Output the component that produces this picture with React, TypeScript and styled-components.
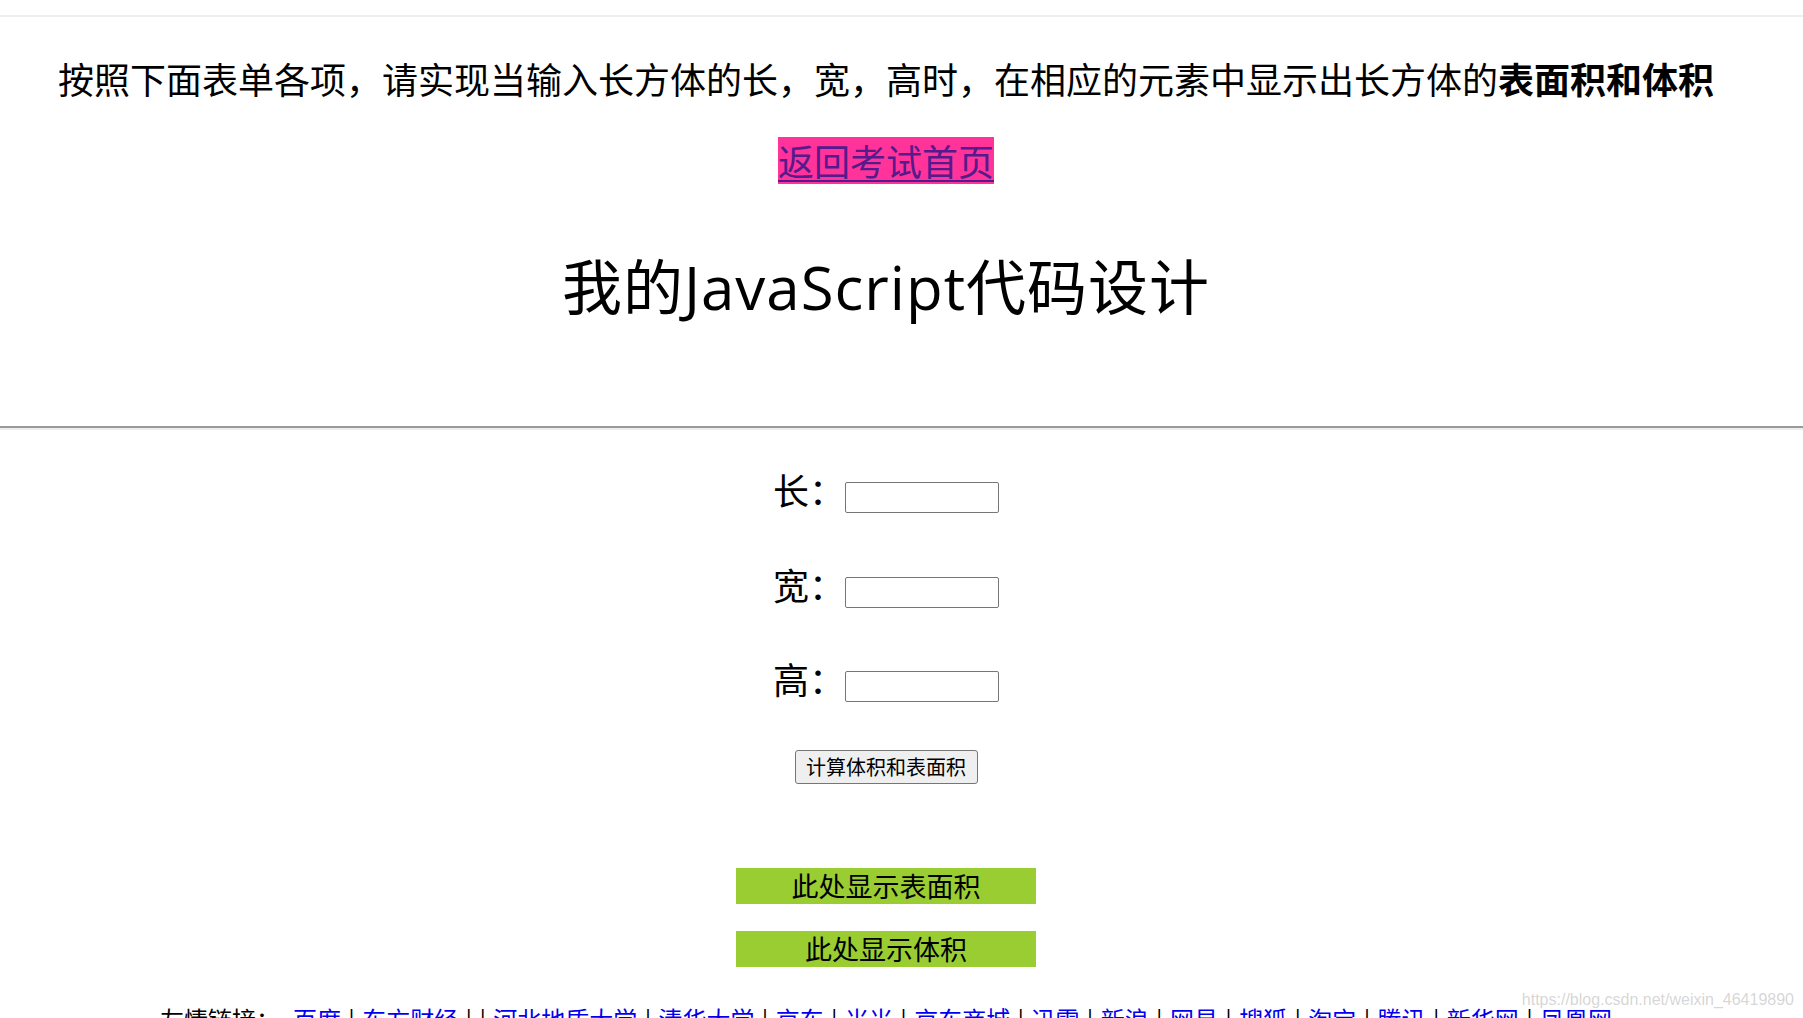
import React from "react";
import styled, { createGlobalStyle } from "styled-components";

const GlobalStyle = createGlobalStyle`
  html, body {
    margin: 0;
    padding: 0;
    background: #ffffff;
    height: 1018px;
    overflow: hidden;
  }
  body {
    font-family: "Noto Sans CJK SC", "Noto Sans", sans-serif;
    color: #000;
  }
`;

const Page = styled.div`
  position: relative;
  width: 1803px;
  height: 1018px;
  overflow: hidden;
`;

const TopStrip = styled.div`
  height: 15px;
  border-bottom: 2px solid #efefef;
`;

const Column = styled.div`
  width: 1772px;
  display: flex;
  flex-direction: column;
  align-items: center;
  text-align: center;
`;

const Intro = styled.p`
  margin: 37px 0 0;
  font-size: 36px;
  line-height: 48px;
  white-space: nowrap;
  font-weight: 400;

  b {
    font-weight: 700;
  }
`;

const HomeLink = styled.a`
  display: inline-block;
  margin-top: 35px;
  height: 47px;
  line-height: 47px;
  font-size: 36px;
  background: #ff3399;
  color: #551a8b;
  text-decoration: underline;
  text-decoration-thickness: 2px;
  text-underline-offset: 4px;
`;

const Title = styled.h1`
  margin: 67px 0 0;
  font-family: "Open Sans", "Noto Sans CJK SC", sans-serif;
  font-size: 60px;
  line-height: 72px;
  font-weight: 400;
  letter-spacing: 1px;
`;

const Rule = styled.hr`
  margin: 103px 0 0;
  width: 100%;
  height: 0;
  border: none;
  border-top: 2px solid #9a9a9a;
  border-bottom: 2px solid #eeeeee;
`;

const Form = styled.form`
  margin-top: 52px;
  display: flex;
  flex-direction: column;
  align-items: center;
  gap: 63.5px;
`;

const FieldRow = styled.label`
  height: 31px;
  display: flex;
  align-items: center;
  justify-content: center;
`;

const FieldLabel = styled.span`
  font-size: 36px;
  line-height: 31px;
  width: 72px;
  text-align: left;
  transform: translateY(-8px);
`;

const FieldInput = styled.input`
  box-sizing: border-box;
  width: 154px;
  height: 31px;
  border: 1px solid #767676;
  border-radius: 2px;
  padding: 2px 4px;
  font-size: 20px;
  background: #fff;
  outline: none;
`;

const CalcButton = styled.button`
  margin-top: 48px;
  box-sizing: border-box;
  width: 183px;
  height: 34px;
  padding: 0;
  font-family: "Noto Sans CJK SC", sans-serif;
  font-size: 20px;
  line-height: 32px;
  color: #000;
  background: #efefef;
  border: 1px solid #767676;
  border-radius: 3px;
`;

const ResultBox = styled.div<{ $first?: boolean }>`
  margin-top: ${(p) => (p.$first ? "84px" : "27px")};
  width: 300px;
  height: 36px;
  line-height: 36px;
  font-size: 27px;
  background: #9acd32;
`;

const Footer = styled.div`
  margin-top: 36px;
  font-size: 24px;
  line-height: 32px;
  white-space: nowrap;
  word-spacing: 2px;

  a {
    color: #0000ee;
    text-decoration: underline;
  }
`;

const FooterLabel = styled.span`
  margin-right: 13px;
`;

const Watermark = styled.div`
  position: absolute;
  right: 9px;
  top: 991px;
  font-family: "Liberation Sans", Arial, sans-serif;
  font-size: 16px;
  color: rgba(150, 150, 150, 0.4);
  pointer-events: none;
`;

const fields = ["长", "宽", "高"];

const links = [
  "百度",
  "东方财经",
  "",
  "河北地质大学",
  "清华大学",
  "京东",
  "米米",
  "京东商城",
  "迅雷",
  "新浪",
  "网易",
  "搜狐",
  "淘宝",
  "腾讯",
  "新华网",
  "凤凰网",
];

export default function App() {
  return (
    <>
      <GlobalStyle />
      <Page>
        <TopStrip />
        <Column>
          <Intro>
            按照下面表单各项，请实现当输入长方体的长，宽，高时，在相应的元素中显示出长方体的
            <b>表面积和体积</b>
          </Intro>
          <HomeLink href="#">返回考试首页</HomeLink>
          <Title>我的JavaScript代码设计</Title>
        </Column>
        <Rule />
        <Column>
          <Form onSubmit={(e) => e.preventDefault()}>
            {fields.map((f) => (
              <FieldRow key={f}>
                <FieldLabel>{f}：</FieldLabel>
                <FieldInput type="text" />
              </FieldRow>
            ))}
          </Form>
          <CalcButton type="button">计算体积和表面积</CalcButton>
          <ResultBox $first>此处显示表面积</ResultBox>
          <ResultBox>此处显示体积</ResultBox>
          <Footer>
            <FooterLabel>友情链接：</FooterLabel>
            {links.map((l, i) => (
              <React.Fragment key={i}>
                {i > 0 && " | "}
                {l && <a href="#">{l}</a>}
              </React.Fragment>
            ))}
          </Footer>
        </Column>
        <Watermark>https://blog.csdn.net/weixin_46419890</Watermark>
      </Page>
    </>
  );
}
